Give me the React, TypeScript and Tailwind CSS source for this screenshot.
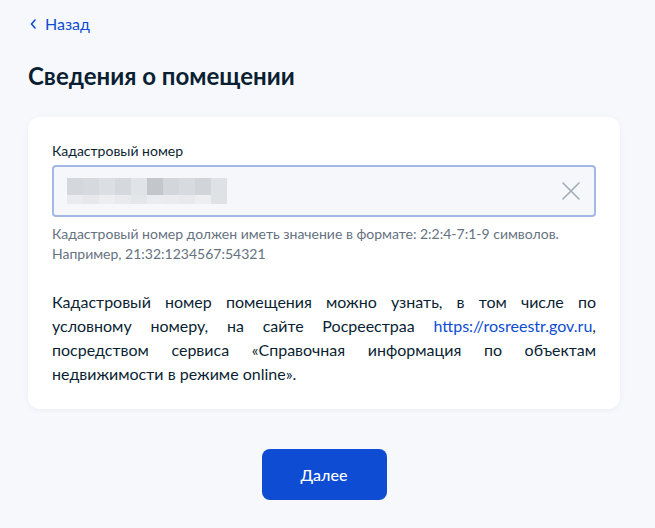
const topRow = ['#d4d7db', '#d6d9dd', '#dcdfe2', '#d5d9de', '#e1e4e7', '#c3c7cc', '#d3d6da', '#d7dade', '#d1d5d9', '#dfe2e5'];
const bottomRow = ['#e9ebee', '#e6e8eb', '#eceef0', '#e8eaed', '#e4e7ea', '#eaecef', '#e9ebee', '#e7e9ec', '#eceef0', '#dfe2e5'];

function BlurredValue() {
  // masked value, shown as pixelated blocks
  return (
    <div className="flex flex-col">
      <div className="flex">
        {topRow.map((c, i) => (
          <div key={i} className="h-[17px] w-[16px]" style={{ backgroundColor: c }} />
        ))}
      </div>
      <div className="flex">
        {bottomRow.map((c, i) => (
          <div key={i} className="h-[9px] w-[16px]" style={{ backgroundColor: c }} />
        ))}
      </div>
    </div>
  );
}

export default function App() {
  return (
    <div className="min-h-[528px] w-full bg-[#f7f8fb] px-[28px] pt-[14px] text-[#0b1f33] font-['Lato','Noto_Sans',sans-serif]">
      <a href="#" className="flex items-center gap-[9px] text-[16px] leading-[20px] text-[#0d4cd3]">
        <svg className="ml-[2px] h-[10px] w-[6px]" viewBox="0 0 6 10" fill="none">
          <path d="M5 1L1.5 5L5 9" stroke="currentColor" strokeWidth="1.6" strokeLinecap="round" strokeLinejoin="round" />
        </svg>
        Назад
      </a>

      <h1 className="mt-[28px] text-[24px] leading-[28px] font-bold">Сведения о помещении</h1>

      <div className="w-[592px]">
        <div className="mt-[27px] rounded-[12px] bg-white px-[24px] pt-[24px] pb-[23px] shadow-[0_1px_4px_rgba(230,235,245,0.8)]">
          <label className="block text-[14px] leading-[20px]">Кадастровый номер</label>
          <div className="mt-[4px] flex h-[52px] items-center justify-between rounded-[4px] border-2 border-[#a4b8e6] bg-[#f5f7fa] pl-[13px] pr-[14px]">
            <BlurredValue />
            <svg className="h-[18px] w-[18px] text-[#9fabb8]" viewBox="0 0 18 18" fill="none">
              <path d="M1 1L17 17M17 1L1 17" stroke="currentColor" strokeWidth="1.6" strokeLinecap="round" />
            </svg>
          </div>
          <p className="mt-[7px] text-[14px] leading-[20px] text-[#66727f]">
            Кадастровый номер должен иметь значение в формате: 2:2:4-7:1-9 символов.
            <br />
            Например, 21:32:1234567:54321
          </p>
          <p className="mt-[26px] text-justify text-[16px] leading-[24px]">
            Кадастровый номер помещения можно узнать, в том числе по условному номеру, на сайте Росреестраа{' '}
            <a href="#" className="text-[#0d4cd3]">https://rosreestr.gov.ru</a>, посредством сервиса «Справочная информация по
            объектам недвижимости в режиме online».
          </p>
        </div>

        <div className="mt-[40px] flex justify-center">
          <button className="h-[51px] w-[125px] rounded-[8px] bg-[#0d4cd3] text-[16px] font-medium text-white">Далее</button>
        </div>
      </div>
    </div>
  );
}
